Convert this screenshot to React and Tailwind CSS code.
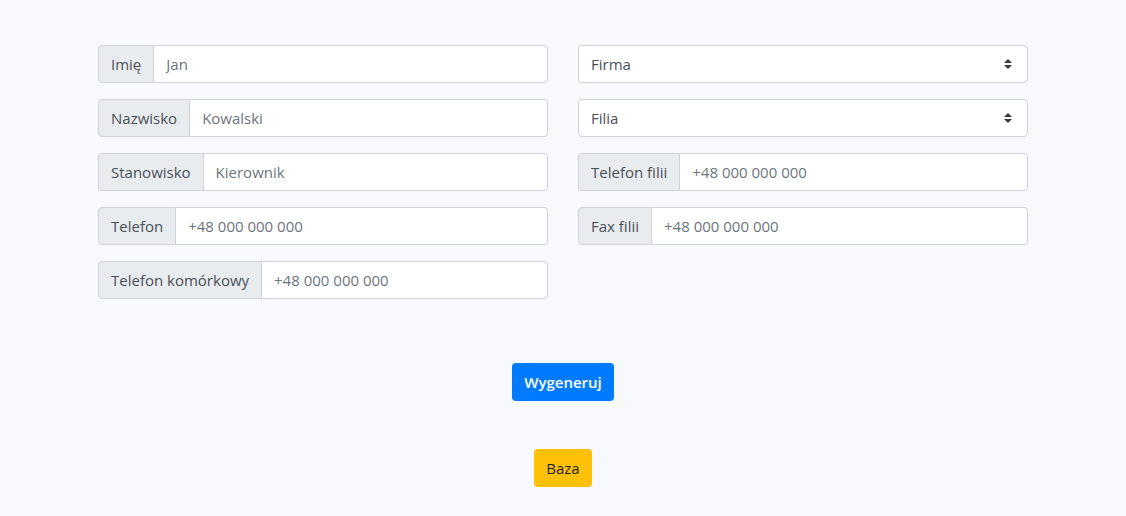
import React from 'react';

const font = { fontFamily: '"Segoe UI", "Open Sans", "Noto Sans", sans-serif' };

function Field({ label, placeholder }) {
  return (
    <div className="flex h-[38px] mb-4 text-[15px]">
      <span className="flex items-center px-3 bg-[#e9ecef] border border-[#ced4da] rounded-l text-[#495057] whitespace-nowrap">
        {label}
      </span>
      <input
        placeholder={placeholder}
        className="flex-1 min-w-0 px-3 bg-white border border-l-0 border-[#ced4da] rounded-r text-[#495057] placeholder:text-[#6c757d] outline-none"
      />
    </div>
  );
}

function Select({ label }) {
  return (
    <div className="flex items-center justify-between h-[38px] mb-4 pl-3 pr-[15px] bg-white border border-[#ced4da] rounded text-[15px] text-[#495057]">
      <span>{label}</span>
      <svg width="8" height="10" viewBox="0 0 4 5">
        <path fill="#343a40" d="M2 0L0 2h4zm0 5L0 3h4z" />
      </svg>
    </div>
  );
}

export default function App() {
  return (
    <div className="min-h-screen bg-[#f7f9fc]" style={font}>
      <div className="max-w-[960px] mx-auto px-[15px] pt-[45px]">
        <div className="grid grid-cols-2 gap-[30px]">
          <div>
            <Field label="Imię" placeholder="Jan" />
            <Field label="Nazwisko" placeholder="Kowalski" />
            <Field label="Stanowisko" placeholder="Kierownik" />
            <Field label="Telefon" placeholder="+48 000 000 000" />
            <Field label="Telefon komórkowy" placeholder="+48 000 000 000" />
          </div>
          <div>
            <Select label="Firma" />
            <Select label="Filia" />
            <Field label="Telefon filii" placeholder="+48 000 000 000" />
            <Field label="Fax filii" placeholder="+48 000 000 000" />
          </div>
        </div>
        <div className="flex flex-col items-center pt-[48px]">
          <button className="h-[38px] px-3 rounded bg-[#007bff] text-white text-[15px] font-semibold">
            Wygeneruj
          </button>
          <button className="h-[38px] px-3 mt-[48px] rounded bg-[#ffc107] text-[#212529] text-[15px]">
            Baza
          </button>
        </div>
      </div>
    </div>
  );
}
